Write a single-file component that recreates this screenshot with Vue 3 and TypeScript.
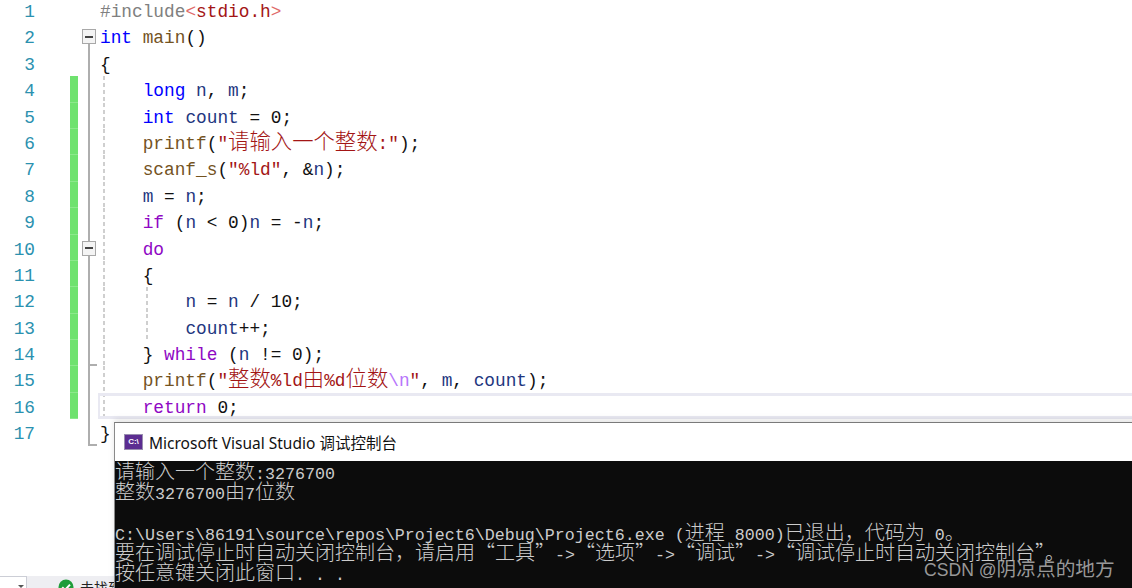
<script setup lang="ts">
type Tok = [string, string?];
interface Row { toks: Tok[]; fold: string; green: boolean; guides: string; current?: boolean }

const I = '    ';
const code: [Tok[], string, string][] = [
  [[['#include', 'pp'], ['<', 'ang'], ['stdio.h', 'str'], ['>', 'ang']], '', ''],
  [[['int', 'kw'], [' '], ['main', 'fn'], ['()']], 'box first', ''],
  [[['{']], 'line', ''],
  [[[I], ['long', 'kw'], [' '], ['n', 'v'], [', '], ['m', 'v'], [';']], 'line', 'g1'],
  [[[I], ['int', 'kw'], [' '], ['count', 'v'], [' = 0;']], 'line', 'g1'],
  [[[I], ['printf', 'fn'], ['('], ['"请输入一个整数:"', 'str'], [');']], 'line', 'g1'],
  [[[I], ['scanf_s', 'fn'], ['('], ['"%ld"', 'str'], [', &'], ['n', 'v'], [');']], 'line', 'g1'],
  [[[I], ['m', 'v'], [' = '], ['n', 'v'], [';']], 'line', 'g1'],
  [[[I], ['if', 'ctl'], [' ('], ['n', 'v'], [' < 0)'], ['n', 'v'], [' = -'], ['n', 'v'], [';']], 'line', 'g1'],
  [[[I], ['do', 'ctl']], 'box', 'g1'],
  [[[I + '{']], 'line', 'g1'],
  [[[I + I], ['n', 'v'], [' = '], ['n', 'v'], [' / 10;']], 'line', 'g1 g2'],
  [[[I + I], ['count', 'v'], ['++;']], 'line', 'g1 g2'],
  [[[I + '} '], ['while', 'ctl'], [' ('], ['n', 'v'], [' != 0);']], 'tick', 'g1'],
  [[[I], ['printf', 'fn'], ['('], ['"整数%ld由%d位数', 'str'], ['\\n', 'esc'], ['"', 'str'], [', '], ['m', 'v'], [', '], ['count', 'v'], [');']], 'line', 'g1'],
  [[[I], ['return', 'ctl'], [' 0;']], 'line', 'g1'],
  [[['}']], 'end', ''],
];

const rows: Row[] = code.map(([toks, fold, guides], i) => ({
  toks,
  fold,
  guides,
  green: i >= 3 && i <= 15,
  current: i === 15,
}));

const cjkRe = /([\u2E80-\uFFEF\u201C\u201D]+)/;
function split(text: string): { t: string; cjk: boolean }[] {
  return text.split(cjkRe).filter(Boolean).map(t => ({ t, cjk: cjkRe.test(t) }));
}

const consoleLines = [
  '请输入一个整数:3276700',
  '整数3276700由7位数',
  ' ',
  'C:\\Users\\86191\\source\\repos\\Project6\\Debug\\Project6.exe (进程 8000)已退出，代码为 0。',
  '要在调试停止时自动关闭控制台，请启用“工具”->“选项”->“调试”->“调试停止时自动关闭控制台”。',
  '按任意键关闭此窗口. . .',
];
</script>

<template>
  <div class="page" lang="zh-CN">
    <div class="editor">
      <div v-for="(r, i) in rows" :key="i" class="row">
        <div class="num">{{ i + 1 }}</div>
        <div class="change" :class="{ on: r.green }"></div>
        <div class="fold" :class="r.fold">
          <span v-if="r.fold.includes('box')" class="foldbox"></span>
        </div>
        <div class="code" :class="[r.guides, { current: r.current }]"><span v-for="(tk, j) in r.toks" :key="j" :class="tk[1]"><template v-for="(p, k) in split(tk[0])" :key="k"><span v-if="p.cjk" class="cjk">{{ p.t }}</span><template v-else>{{ p.t }}</template></template></span></div>
      </div>
    </div>

    <div class="status">
      <div class="combo"><span class="caret"></span></div>
      <svg class="check" width="16" height="16" viewBox="0 0 16 16">
        <circle cx="8" cy="8" r="7.5" fill="#1f9d3a" />
        <path d="M4.2 8.2 7 11l5-5.4" fill="none" stroke="#fff" stroke-width="2" />
      </svg>
      <span class="status-text">未找到相关问题</span>
    </div>

    <div class="console">
      <div class="titlebar">
        <div class="vsicon">C:\</div>
        <span class="title">Microsoft Visual Studio 调试控制台</span>
      </div>
      <div class="term">
        <div v-for="(l, i) in consoleLines" :key="i" class="tline"><template v-for="(p, k) in split(l)" :key="k"><span v-if="p.cjk" class="tcjk">{{ p.t }}</span><template v-else>{{ p.t }}</template></template></div>
      </div>
    </div>

    <div class="mark">CSDN @<span class="mark-cjk">阴凉点的地方</span></div>
  </div>
</template>

<style scoped>
.page {
  position: relative;
  width: 1132px;
  height: 588px;
  overflow: hidden;
  background: #fff;
  display: flex;
  flex-direction: column;
}
.editor {
  margin-top: -3px;
  font-family: "Liberation Mono", "Noto Sans CJK SC", monospace;
  font-size: 17.8px;
  color: #111;
}
.row {
  display: grid;
  grid-template-columns: 69.5px 8px 20.5px 1fr;
  grid-template-rows: 26.4px;
  height: 26.4px;
  line-height: 30.4px;
}
.num {
  padding-right: 34.5px;
  text-align: right;
  color: #2b91af;
}
.change.on {
  background: #6fe26f;
  border-bottom: 1px solid #8ce88c;
  box-sizing: border-box;
}
.fold {
  position: relative;
}
.fold.line::before,
.fold.tick::before,
.fold.end::before,
.fold.box::before {
  content: "";
  position: absolute;
  left: 10.5px;
  top: 0;
  bottom: 0;
  width: 2px;
  background: #aeaeae;
}
.fold.box.first::before {
  top: 50%;
}
.fold.tick::after,
.fold.end::after {
  content: "";
  position: absolute;
  left: 10.5px;
  bottom: 0;
  width: 9px;
  height: 2px;
  background: #aeaeae;
}
.foldbox {
  position: absolute;
  left: 4.5px;
  top: 6px;
  width: 14px;
  height: 15px;
  box-sizing: border-box;
  border: 1px solid #a8a8a8;
  background: #f4f4f4;
}
.foldbox::after {
  content: "";
  position: absolute;
  left: 2px;
  right: 2px;
  top: 5.5px;
  height: 2px;
  background: #444;
}
.code {
  white-space: pre;
  padding-left: 2px;
  background-repeat: no-repeat;
}
.code.g1 {
  background-image: repeating-linear-gradient(#cfcfcf 0 4px, transparent 4px 7px);
  background-size: 2px 100%;
  background-position: 5px 0;
}
.code.g1.g2 {
  background-image:
    repeating-linear-gradient(#cfcfcf 0 4px, transparent 4px 7px),
    repeating-linear-gradient(#cfcfcf 0 4px, transparent 4px 7px);
  background-size: 2px 100%, 2px 100%;
  background-position: 5px 0, 48px 0;
}
.code.current {
  box-shadow: inset 2px 3px 0 #e9e9f2, inset 0 -3px 0 #e9e9f2;
}
.cjk {
  font-family: "Noto Sans CJK SC", sans-serif;
  font-size: 21.36px;
  font-weight: 300;
  line-height: 1;
}
.kw { color: #0000ff; }
.ctl { color: #8f08c4; }
.fn { color: #74531f; }
.v { color: #1f377f; }
.str { color: #a31515; }
.pp { color: #808080; }
.ang { color: #e06a6a; }
.esc { color: #b776fb; }

.status {
  position: absolute;
  left: 0;
  right: 0;
  bottom: 0;
  height: 12px;
  background: #eeeef2;
  display: flex;
  align-items: flex-start;
}
.combo {
  position: relative;
  width: 27px;
  height: 12px;
  box-sizing: border-box;
  background: #fff;
  border-top: 1px solid #ccced6;
  border-right: 1px solid #ccced6;
}
.caret {
  position: absolute;
  left: 18px;
  top: 8px;
  border-left: 3px solid transparent;
  border-right: 3px solid transparent;
  border-top: 3px solid #555;
}
.check {
  margin-left: 31px;
  margin-top: 3px;
  flex: none;
}
.status-text {
  margin-left: 6px;
  margin-top: 2px;
  font-family: "Noto Sans CJK SC", sans-serif;
  font-size: 14px;
  line-height: 18px;
  color: #222;
  white-space: nowrap;
}

.console {
  position: absolute;
  left: 114px;
  top: 422px;
  width: 1030px;
  height: 180px;
  background: #fff;
  border-top: 1px solid #7a7a7a;
  border-left: 1px solid #8a8a8a;
  box-shadow: 0 -3px 6px rgba(0, 0, 0, 0.1);
}
.titlebar {
  height: 38px;
  display: flex;
  align-items: center;
  gap: 6px;
  padding-left: 9px;
  background: #fff;
}
.vsicon {
  width: 19px;
  height: 16px;
  box-sizing: border-box;
  background: #5c2d91;
  border: 1px solid #9a8fb0;
  color: #fff;
  font-family: "Liberation Sans", sans-serif;
  font-size: 8px;
  font-weight: 700;
  line-height: 14px;
  text-align: center;
  overflow: hidden;
}
.title {
  font-family: "Noto Sans", "Noto Sans CJK SC", sans-serif;
  font-size: 15.5px;
  color: #111;
  white-space: nowrap;
}
.term {
  background: #0c0c0c;
  color: #cccccc;
  height: 142px;
  font-family: "Liberation Mono", "Noto Sans CJK SC", monospace;
  font-size: 16.67px;
}
.tline {
  height: 20.2px;
  line-height: 15px;
  white-space: pre;
}
.tcjk {
  font-family: "Noto Sans CJK SC", sans-serif;
  font-size: 20px;
  font-weight: 300;
  line-height: 1;
}
.mark {
  position: absolute;
  left: 924px;
  top: 554px;
  font-family: "Liberation Sans", "Noto Sans CJK SC", sans-serif;
  font-size: 17.6px;
  line-height: 28px;
  color: rgba(190, 190, 190, 0.8);
  white-space: nowrap;
}
.mark-cjk {
  font-family: "Noto Sans CJK SC", sans-serif;
  font-size: 19.7px;
}
</style>

<style>
html, body { margin: 0; background: #fff; overflow: hidden; }
</style>
